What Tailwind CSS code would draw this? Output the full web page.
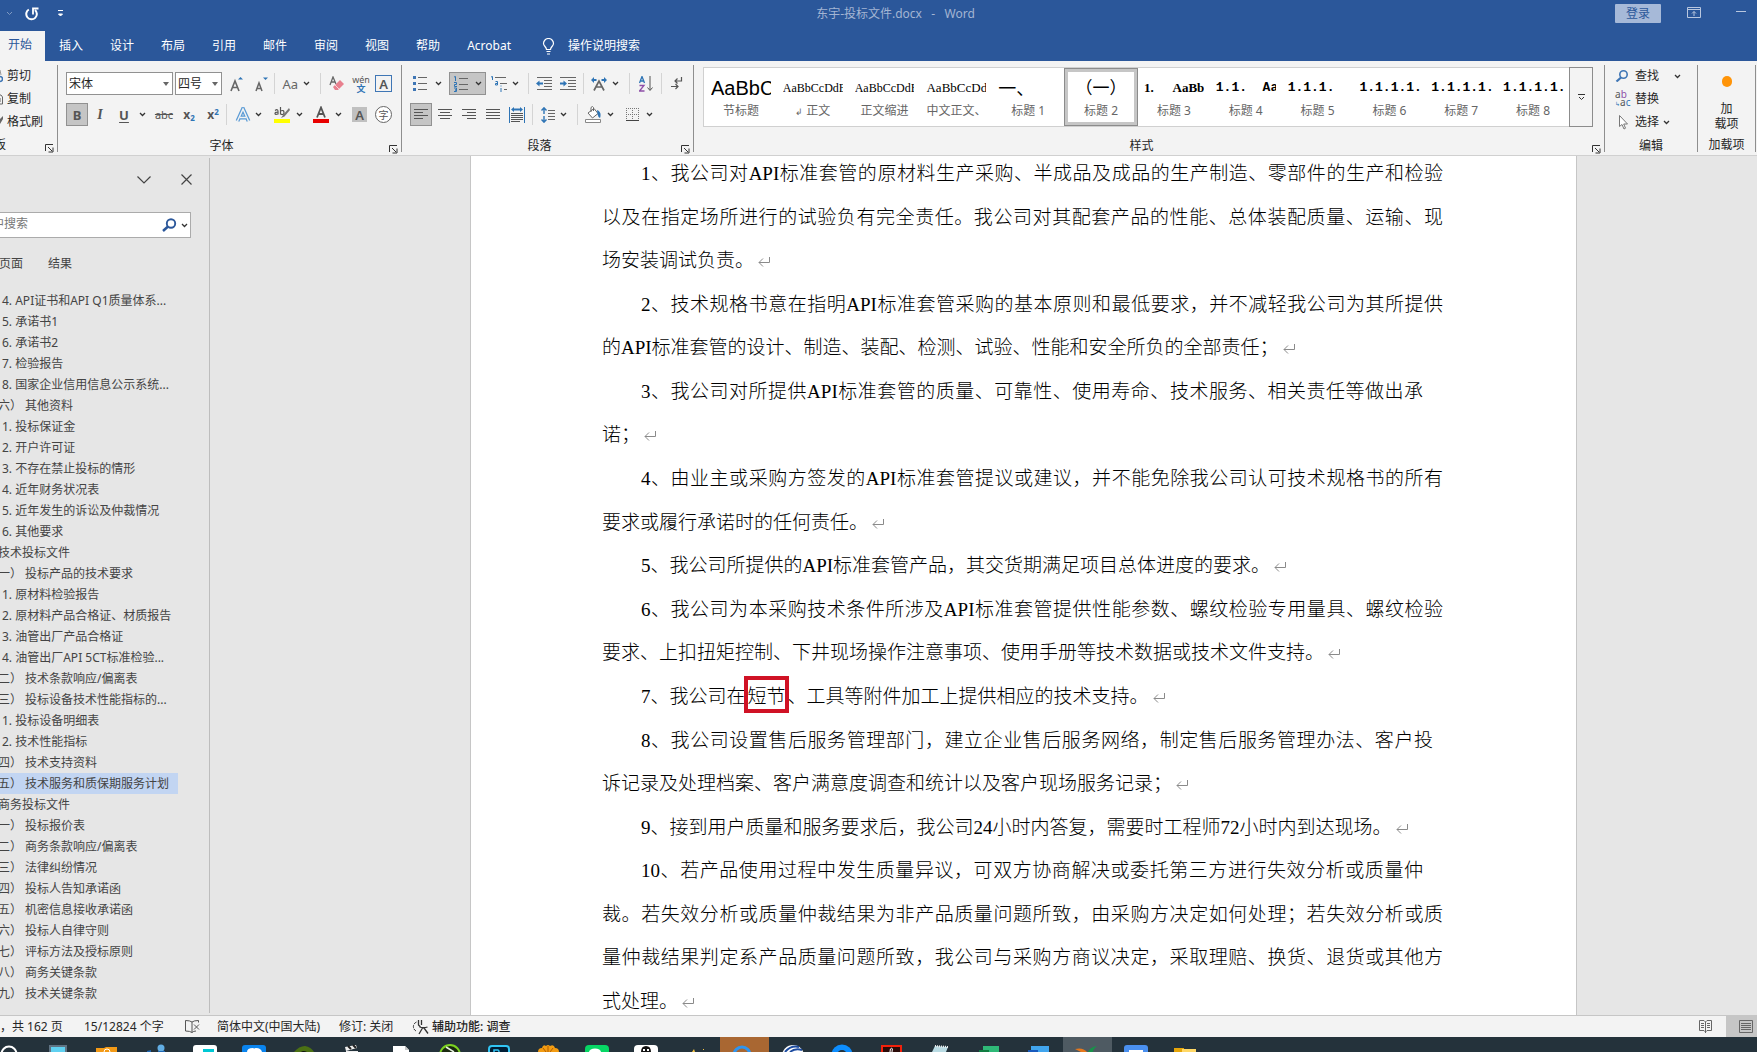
<!DOCTYPE html>
<html lang="zh-CN">
  <head>
    <meta charset="UTF-8" />
    <meta name="viewport" content="width=device-width, initial-scale=1.0" />
    <script src="https://cdn.jsdelivr.net/npm/@tailwindcss/browser@4"></script>
    <title>东宇-投标文件.docx - Word</title>
  </head>
  <body class="h-screen flex flex-col overflow-hidden bg-[#e6e6e6] text-[#262626] text-[12px] leading-[16px] font-['Noto_Sans','Noto_Sans_CJK_SC',sans-serif]">
    <!-- shared icons -->
    <svg class="hidden">
      <symbol id="chev" viewBox="0 0 7 5"><path d="M1 1l2.500 2.500L6 1" fill="none" stroke="#333" stroke-width="1.300" /></symbol>
      <symbol id="tri" viewBox="0 0 6 4"><path d="M0 0h6L3 4z" fill="#666" /></symbol>
      <symbol id="launch" viewBox="0 0 9 9"><path d="M.5 7V.5H8M3 3l4 4M8 3.500V8H3.500" fill="none" stroke="#333" /></symbol>
      <symbol id="enter" viewBox="0 0 12 10"><path d="M11.500 0v5.500H1M5 1.500l-4 4 4 4" fill="none" stroke="#8a8a8a" /></symbol>
    </svg>

    <header class="bg-[#2b579a] shrink-0">
      <div class="h-[31px] flex">
        <div class="w-[176px] flex items-center pl-[6px] pb-1">
          <svg class="w-[7px] h-[5px] opacity-40" viewBox="0 0 7 5"><path d="M1 1l2.500 2.500L6 1" fill="none" stroke="#fff" /></svg>
          <button class="ml-3" aria-label="重复">
            <svg class="w-[14px] h-[14px]" viewBox="0 0 14 14"><path d="M3.800 2.500A5.300 5.300 0 1 0 10 3" fill="none" stroke="#fff" stroke-width="2" /><path d="M13.500 1.500H8V7.500" fill="none" stroke="#fff" stroke-width="1.800" /></svg>
          </button>
          <button class="ml-[18px]" aria-label="自定义快速访问工具栏">
            <svg class="w-[7px] h-[7px]" viewBox="0 0 7 7"><path d="M1 .5h5M1.500 4h4L3.500 6z" fill="#fff" stroke="#fff" /></svg>
          </button>
        </div>
        <div class="flex-1 text-center text-[#a3b5d3] pt-[6px] whitespace-pre">东宇-投标文件.docx   -   Word</div>
        <div class="w-[142px] flex pt-1">
          <button class="w-[46px] h-[19px] bg-[#a6b9d8] text-[#2b579a] rounded-[1px]">登录</button>
          <svg class="w-[14px] h-[11px] ml-[26px] mt-[3px]" viewBox="0 0 14 11"><path d="M.5.500h13v10H.5zM.5 2.500h13M7 9V4.500M5 6.500l2-2 2 2" fill="none" stroke="#b9c7df" /></svg>
          <svg class="w-[10px] h-[2px] ml-[35px] mt-[7px]" viewBox="0 0 10 2"><path d="M0 .5h10" stroke="#b9c7df" /></svg>
        </div>
      </div>
      <nav class="h-[30px] flex items-center gap-[27px] text-white">
        <a href="#" class="h-full w-[45px] -mr-[13px] pl-2 pt-[6px] bg-[#f3f3f3] text-[#2b579a]">开始</a>
        <a href="#">插入</a>
        <a href="#">设计</a>
        <a href="#">布局</a>
        <a href="#">引用</a>
        <a href="#">邮件</a>
        <a href="#">审阅</a>
        <a href="#">视图</a>
        <a href="#">帮助</a>
        <a href="#">Acrobat</a>
        <a href="#" class="flex items-center gap-[13px] pl-1">
          <svg class="w-[13px] h-[17px]" viewBox="0 0 13 17"><path d="M4.500 11.500C4.500 9 1.500 8 1.500 5.500a5 5 0 0 1 10 0c0 2.500-3 3.500-3 6zM4.500 13.500h4M5 16h3" fill="none" stroke="#fff" stroke-width="1.200" /></svg>
          操作说明搜索
        </a>
      </nav>
    </header>

    <section class="h-[95px] shrink-0 bg-[#f3f3f3] border-b border-[#d0d0d0] flex pt-1 pb-[3px]">
      <!-- clipboard -->
      <div class="w-[58px] shrink-0 border-r border-[#8e8e8e]">
        <div class="flex flex-col gap-[7px] pt-[3px]">
          <button class="flex items-center gap-1 h-4 whitespace-nowrap">
            <svg class="w-[3px] h-[14px]" viewBox="0 0 3 14"><path d="M0 1l1 5" stroke="#999" /><circle cx="0" cy="10" r="2.500" fill="none" stroke="#3f76b5" stroke-width="1.500" /></svg>剪切
          </button>
          <button class="flex items-center gap-1 h-4 whitespace-nowrap">
            <svg class="w-[3px] h-[14px]" viewBox="0 0 3 14"><path d="M0 3h1l1.500 2v7H0M0 7h1M0 9h1" fill="none" stroke="#666" /></svg>复制
          </button>
          <button class="flex items-center gap-1 h-4 whitespace-nowrap">
            <svg class="w-[3px] h-[14px]" viewBox="0 0 3 14"><path d="M0 4l3-3v3L0 9z" fill="#666" /></svg>格式刷
          </button>
        </div>
        <div class="flex justify-between items-end pr-[3px] mt-[7px]">
          <span class="-ml-[6px]">板</span>
          <svg class="w-[9px] h-[9px]"><use href="#launch" /></svg>
        </div>
      </div>

      <!-- font -->
      <div class="w-[344px] shrink-0 border-r border-[#8e8e8e] pt-[7px] pl-2">
        <div class="flex items-center h-[23px]">
          <div class="relative">
            <select aria-label="字体" class="appearance-none block w-[107px] h-[23px] bg-white border border-[#919191] pl-[2px]"><option>宋体</option></select>
            <svg class="absolute right-1 top-[10px] w-[6px] h-[4px] pointer-events-none"><use href="#tri" /></svg>
          </div>
          <div class="relative ml-[2px]">
            <select aria-label="字号" class="appearance-none block w-[47px] h-[23px] bg-white border border-[#919191] pl-[2px]"><option>四号</option></select>
            <svg class="absolute right-1 top-[10px] w-[6px] h-[4px] pointer-events-none"><use href="#tri" /></svg>
          </div>
          <button class="w-[28px] flex justify-center" aria-label="增大字号">
            <svg class="w-[13px] h-[16px]" viewBox="0 0 13 16"><path d="M1 15L5 5l4 10M2.500 11.500h5" fill="none" stroke="#666" stroke-width="1.600" /><path d="M8 3.500h5L10.500 1z" fill="#2e74b5" /></svg>
          </button>
          <button class="w-[22px] flex justify-center" aria-label="减小字号">
            <svg class="w-[13px] h-[16px]" viewBox="0 0 13 16"><path d="M1 15l3-8 3 8M2 12.500h4" fill="none" stroke="#666" stroke-width="1.500" /><path d="M8 1.500h5L10.500 4z" fill="#2e74b5" /></svg>
          </button>
          <i class="w-px h-[21px] bg-[#d4d4d4] mx-[2px]"></i>
          <button class="w-[33px] flex items-center justify-end gap-[5px] text-[13px] text-[#666]">Aa <svg class="w-[7px] h-[5px]"><use href="#chev" /></svg></button>
          <i class="w-px h-[21px] bg-[#d4d4d4] ml-[10px]"></i>
          <button class="w-[24px] flex justify-end" aria-label="清除格式">
            <svg class="w-[16px] h-[16px]" viewBox="0 0 16 16"><path d="M1 9l3-8 3 7M2 6h4" fill="none" stroke="#666" stroke-width="1.300" /><path d="M4 11l7-7 4 4-6 6H6z" fill="#e8808e" /><path d="M6 9l4 4" stroke="#f7d5da" /></svg>
          </button>
          <button class="ml-1 w-[24px] text-[9px] leading-[9px] text-[#555]">wén<br /><span class="text-[#2e74b5] font-bold">文</span></button>
          <button class="ml-[2px] w-[17px] h-[17px] border border-[#3f76b5] text-[13px] leading-[14px] font-semibold text-[#555]">A</button>
        </div>
        <div class="flex items-center h-[23px] mt-2 text-[#555]">
          <button class="w-[22px] h-[23px] bg-[#c5c5c5] border border-[#919191] font-bold text-[13px]">B</button>
          <button class="w-[24px] text-[14px] italic font-['Liberation_Serif'] font-bold">I</button>
          <button class="w-[24px] text-[13px] font-bold underline underline-offset-2">U</button>
          <svg class="w-[7px] h-[5px] ml-[3px]"><use href="#chev" /></svg>
          <button class="ml-[3px] w-[30px] text-[11px] line-through">abc</button>
          <button class="w-[20px] font-bold text-[12px]">x<sub class="text-[8px] text-[#2e74b5]">2</sub></button>
          <button class="w-[28px] font-bold text-[12px]">x<sup class="text-[8px] text-[#2e74b5]">2</sup></button>
          <i class="w-px h-[21px] bg-[#d4d4d4] -ml-px"></i>
          <button class="ml-[8px] w-[16px]" aria-label="文本效果">
            <svg class="w-[16px] h-[16px]" viewBox="0 0 16 16"><path d="M2.500 14L8 2l5.500 12M5 10.500h6" fill="none" stroke="#5b9bd5" stroke-width="4" /><path d="M2.500 14L8 2l5.500 12M5 10.500h6" fill="none" stroke="#f3f3f3" stroke-width="1.500" /></svg>
          </button>
          <svg class="w-[7px] h-[5px] ml-1"><use href="#chev" /></svg>
          <button class="ml-3 w-[16px]" aria-label="突出显示">
            <svg class="w-[16px] h-[17px]" viewBox="0 0 16 17"><path d="M1 4.500q3-2 3 1v3M4 6q-3 0-3 1.500t3 .5M6.500 1v7.500M6.500 5q3.500-1.500 3.500 1.500T6.500 8" fill="none" stroke="#555" stroke-width="1.200" /><path d="M15 2l-6 7-2 3 3.500-1.500L16 4z" fill="#777" /><path d="M0 13h16v4H0z" fill="#ff0" /></svg>
          </button>
          <svg class="w-[7px] h-[5px] ml-[6px]"><use href="#chev" /></svg>
          <button class="ml-[10px] w-[16px]" aria-label="字体颜色">
            <svg class="w-[16px] h-[17px]" viewBox="0 0 16 17"><path d="M4 11.500l4-10 4 10M5.500 8h5" fill="none" stroke="#555" stroke-width="1.800" /><path d="M0 13h16v4H0z" fill="#e80000" /></svg>
          </button>
          <svg class="w-[7px] h-[5px] ml-[6px]"><use href="#chev" /></svg>
          <button class="ml-[10px] w-[15px] h-[15px] bg-[#c0c0c0] text-[13px] leading-[14px] font-semibold">A</button>
          <button class="ml-[8px] w-[17px] h-[17px] border border-[#666] rounded-full text-[10px] leading-[14px] bg-white">字</button>
        </div>
        <div class="flex items-end mt-3 pr-[3px]">
          <span class="flex-1 text-center pr-3">字体</span>
          <svg class="w-[9px] h-[9px]"><use href="#launch" /></svg>
        </div>
      </div>

      <!-- paragraph -->
      <div class="w-[292px] shrink-0 border-r border-[#8e8e8e] pt-[7px] pl-2">
        <div class="flex items-center h-[23px]">
          <button class="ml-[3px] flex items-center gap-[8px]" aria-label="项目符号">
            <svg class="w-[14px] h-[15px]" viewBox="0 0 14 15"><path d="M0 0h3v3H0zM0 6h3v3H0zM0 12h3v3H0z" fill="#3f76b5" /><path d="M5 1.500h9M5 7.500h9M5 13.500h9" stroke="#666" /></svg>
            <svg class="w-[7px] h-[5px]"><use href="#chev" /></svg>
          </button>
          <button class="ml-[7px] w-[37px] h-[23px] bg-[#c5c5c5] border border-[#919191] flex items-center justify-center gap-[7px]" aria-label="编号">
            <svg class="w-[14px] h-[16px]" viewBox="0 0 14 16"><path d="M0 1l1.500-.5V5M0 6.500h2.500v2H.5v2H3M0 12h2.500v2H1h1.500v1.500H0" fill="none" stroke="#2e74b5" /><path d="M5 2.500h9M5 8.500h9M5 13.500h9" stroke="#666" /></svg>
            <svg class="w-[7px] h-[5px]"><use href="#chev" /></svg>
          </button>
          <button class="ml-[5px] flex items-center gap-[5px]" aria-label="多级列表">
            <svg class="w-[16px] h-[16px]" viewBox="0 0 16 16"><path d="M0 1l1.500-.5V4M4.500 5.500h2v3.500H4.500V7.500h2M10 9.500v1M10 12v4" fill="none" stroke="#2e74b5" /><path d="M4 1.500h11M9 7.500h7M13 13.500h3" stroke="#666" /></svg>
            <svg class="w-[7px] h-[5px]"><use href="#chev" /></svg>
          </button>
          <i class="w-px h-[21px] bg-[#d4d4d4] ml-[9px]"></i>
          <button class="ml-[7px]" aria-label="减少缩进量">
            <svg class="w-[16px] h-[13px]" viewBox="0 0 16 13"><path d="M1 .5h15M8 3.500h8M8 6.500h8M8 9.500h8M1 12.500h15" stroke="#666" /><path d="M0 6.500l3.500-3v2H7v2H3.500v2z" fill="#2e74b5" /></svg>
          </button>
          <button class="ml-2" aria-label="增加缩进量">
            <svg class="w-[16px] h-[13px]" viewBox="0 0 16 13"><path d="M0 .5h16M8 3.500h8M8 6.500h8M8 9.500h8M0 12.500h16" stroke="#666" /><path d="M7 6.500l-3.500-3v2H0v2h3.500v2z" fill="#2e74b5" /></svg>
          </button>
          <i class="w-px h-[21px] bg-[#d4d4d4] ml-[7px]"></i>
          <button class="ml-[7px] flex items-center gap-[5px]" aria-label="中文版式">
            <svg class="w-[16px] h-[14px]" viewBox="0 0 16 14"><path d="M3 13.500l5-9.500 5 9.500M5 10h6" fill="none" stroke="#666" stroke-width="1.700" /><path d="M0 3l3-3v2h2.500v2H3v2zM16 3l-3-3v2h-2.500v2H13v2z" fill="#2e74b5" /></svg>
            <svg class="w-[7px] h-[5px]"><use href="#chev" /></svg>
          </button>
          <i class="w-px h-[21px] bg-[#d4d4d4] ml-[10px]"></i>
          <button class="ml-[9px]" aria-label="排序">
            <svg class="w-[14px] h-[16px]" viewBox="0 0 14 16"><path d="M.5 7L3 .5 5.500 7M1.500 5h3" fill="none" stroke="#2e74b5" stroke-width="1.300" /><path d="M.5 9.500h4.500l-4.500 5.500h5" fill="none" stroke="#8e4fa8" stroke-width="1.300" /><path d="M11 0v14M8.500 11.500l2.500 3 2.500-3" fill="none" stroke="#555" /></svg>
          </button>
          <i class="w-px h-[21px] bg-[#d4d4d4] ml-[8px]"></i>
          <button class="ml-[9px]" aria-label="显示编辑标记">
            <svg class="w-[12px] h-[14px]" viewBox="0 0 12 14"><path d="M10.500 0v4H4M6.500 1.500L4 4l2.500 2.500M0 9.500h7M4.500 7L7 9.500 4.500 12" fill="none" stroke="#555" stroke-width="1.200" /></svg>
          </button>
        </div>
        <div class="flex items-center h-[23px] mt-2">
          <button class="w-[22px] h-[23px] bg-[#c5c5c5] border border-[#919191] flex items-center justify-center" aria-label="左对齐">
            <svg class="w-[14px] h-[11px]" viewBox="0 0 14 11"><path d="M0 .5h14M0 3.500h9M0 6.500h14M0 9.500h9" stroke="#555" /></svg>
          </button>
          <button class="ml-[6px]" aria-label="居中"><svg class="w-[14px] h-[11px]" viewBox="0 0 14 11"><path d="M0 .5h14M2 3.500h10M0 6.500h14M2 9.500h10" stroke="#555" /></svg></button>
          <button class="ml-[10px]" aria-label="右对齐"><svg class="w-[14px] h-[11px]" viewBox="0 0 14 11"><path d="M0 .5h14M5 3.500h9M0 6.500h14M5 9.500h9" stroke="#555" /></svg></button>
          <button class="ml-[10px]" aria-label="两端对齐"><svg class="w-[14px] h-[11px]" viewBox="0 0 14 11"><path d="M0 .5h14M0 3.500h14M0 6.500h14M0 9.500h14" stroke="#555" /></svg></button>
          <button class="ml-[9px]" aria-label="分散对齐">
            <svg class="w-[16px] h-[16px]" viewBox="0 0 16 16"><path d="M.5 0v16M15.500 0v16" stroke="#2e74b5" /><path d="M2 2.500l3-2.500v1.500h6V0l3 2.500L11 5V3.500H5V5z" fill="#2e74b5" /><path d="M2 6.500h12M2 8.500h12M2 10.500h12M2 12.500h12M2 14.500h9" stroke="#555" /></svg>
          </button>
          <i class="w-px h-[21px] bg-[#d4d4d4] ml-[7px]"></i>
          <button class="ml-[8px] flex items-center gap-[5px]" aria-label="行距">
            <svg class="w-[14px] h-[16px]" viewBox="0 0 14 16"><path d="M3 1v6M3 9v6M.5 3.500L3 .8l2.500 2.700M.5 12.500L3 15.200l2.500-2.700" fill="none" stroke="#2e74b5" stroke-width="1.400" /><path d="M7 3.500h7M7 6.500h7M7 9.500h7M7 12.500h7" stroke="#666" /></svg>
            <svg class="w-[7px] h-[5px]"><use href="#chev" /></svg>
          </button>
          <i class="w-px h-[21px] bg-[#d4d4d4] ml-[10px]"></i>
          <button class="ml-[7px] flex items-center gap-[6px]" aria-label="底纹">
            <svg class="w-[16px] h-[17px]" viewBox="0 0 16 17"><path d="M3 7l6-4.500 4 5L7.500 12zM6 6V1.500q1.500-2 2.500 0V5" fill="#fff" stroke="#666" /><path d="M12 4q5 2 3 8-2-1-2.500-4z" fill="#2e74b5" /><path d="M.5 13.500h15v3H.5z" fill="#fff" stroke="#888" /></svg>
            <svg class="w-[7px] h-[5px]"><use href="#chev" /></svg>
          </button>
          <button class="ml-[12px] flex items-center gap-[7px]" aria-label="边框">
            <svg class="w-[13px] h-[13px]" viewBox="0 0 13 13"><path d="M.5 0v12M6.500 0v12M12.500 0v12M0 .5h13M0 6.500h13" stroke="#777" stroke-dasharray="1 1" /><path d="M0 12.500h13" stroke="#444" /></svg>
            <svg class="w-[7px] h-[5px]"><use href="#chev" /></svg>
          </button>
        </div>
        <div class="flex items-end mt-3 pr-[3px]">
          <span class="flex-1 text-center pr-3">段落</span>
          <svg class="w-[9px] h-[9px]"><use href="#launch" /></svg>
        </div>
      </div>

      <!-- styles -->
      <div class="flex-1 min-w-0 border-r border-[#8e8e8e] pt-[2px] pl-[9px] pr-[3px]">
        <div class="flex h-[60px] mr-2 bg-white border border-[#d0d0d0] text-center text-[#666]">
          <div class="flex-1 min-w-0 flex pl-px *:flex *:flex-col *:items-center *:flex-1 *:min-w-0 *:overflow-hidden *:px-[6px] *:pt-[8px]">
            <button>
              <div class="w-full h-[27px] leading-[24px] text-[20px] text-black overflow-hidden text-left font-['Liberation_Sans']">AaBbC</div>
              节标题
            </button>
            <button>
              <div class="w-full h-[27px] leading-[24px] text-[12px] text-black overflow-hidden whitespace-nowrap text-left font-['Liberation_Serif']">AaBbCcDdE</div>
              <span><span class="text-[9px]">↲</span> 正文</span>
            </button>
            <button>
              <div class="w-full h-[27px] leading-[24px] text-[12px] text-black overflow-hidden whitespace-nowrap text-left font-['Liberation_Serif']">AaBbCcDdE</div>
              正文缩进
            </button>
            <button>
              <div class="w-full h-[27px] leading-[24px] text-[13px] text-black overflow-hidden whitespace-nowrap text-left font-['Liberation_Serif']">AaBbCcDdE</div>
              <span class="whitespace-nowrap">中文正文、</span>
            </button>
            <button>
              <div class="w-full h-[27px] leading-[24px] text-[18px] text-black overflow-hidden whitespace-nowrap text-left">一、</div>
              标题 1
            </button>
            <button class="outline outline-[#8c8c8c] -outline-offset-1 border-4 border-[#c6c6c6] !px-[3px] !pt-[4px]">
              <div class="w-full h-[27px] leading-[24px] text-[17px] text-black overflow-hidden whitespace-nowrap">（一）</div>
              标题 2
            </button>
            <button>
              <div class="w-full h-[27px] leading-[24px] text-[13px] font-bold text-black overflow-hidden whitespace-pre text-left font-['Liberation_Serif']">1.      AaBbC</div>
              标题 3
            </button>
            <button>
              <div class="w-full h-[27px] leading-[24px] text-[13px] font-bold text-black overflow-hidden whitespace-pre text-left font-['Liberation_Mono']">1.1.  AaB</div>
              标题 4
            </button>
            <button>
              <div class="w-full h-[27px] leading-[24px] text-[13px] font-bold text-black overflow-hidden whitespace-pre text-left font-['Liberation_Mono']">1.1.1.</div>
              标题 5
            </button>
            <button>
              <div class="w-full h-[27px] leading-[24px] text-[13px] font-bold text-black whitespace-pre text-left font-['Liberation_Mono']">1.1.1.1.</div>
              标题 6
            </button>
            <button>
              <div class="w-full h-[27px] leading-[24px] text-[13px] font-bold text-black whitespace-pre text-left font-['Liberation_Mono']">1.1.1.1.</div>
              标题 7
            </button>
            <button>
              <div class="w-full h-[27px] leading-[24px] text-[13px] font-bold text-black whitespace-pre text-left font-['Liberation_Mono']">1.1.1.1.</div>
              标题 8
            </button>
          </div>
          <button class="w-6 -my-px -mr-px border border-[#8c8c8c] bg-[#f3f3f3] flex items-center justify-center" aria-label="其他样式">
            <svg class="w-[7px] h-[7px]" viewBox="0 0 7 7"><path d="M0 .5h7M1 3l2.500 2.500L6 3" fill="none" stroke="#333" /></svg>
          </button>
        </div>
        <div class="flex items-end mt-[11px]">
          <span class="flex-1 text-center pr-3">样式</span>
          <svg class="w-[9px] h-[9px]"><use href="#launch" /></svg>
        </div>
      </div>

      <!-- editing -->
      <div class="w-[93px] shrink-0 border-r border-[#8e8e8e] pt-[3px] flex flex-col">
        <div class="flex flex-col gap-[7px] pl-[10px]">
          <button class="flex items-center h-4">
            <svg class="w-[14px] h-[12px] mr-[6px]" viewBox="0 0 14 12"><circle cx="8.500" cy="4.500" r="3.700" fill="none" stroke="#3f76b5" stroke-width="1.600" /><path d="M6 7.500L1.500 11.500" stroke="#3f76b5" stroke-width="2.200" /></svg>
            查找
            <svg class="w-[7px] h-[5px] ml-[15px]"><use href="#chev" /></svg>
          </button>
          <button class="flex items-center h-4">
            <span class="w-[16px] mr-1 text-[10px] leading-[8px] text-left text-[#555]">a<span class="text-[#8e4fa8]">b</span><br /><span class="text-[#2e74b5] text-[6px]">↳</span>a<span class="text-[#2e74b5]">c</span></span>
            替换
          </button>
          <button class="flex items-center h-4">
            <svg class="w-[9px] h-[15px] ml-1 mr-[7px]" viewBox="0 0 9 15"><path d="M.5.500v11l2.500-2 2 4.500 1.500-.8-1.800-4.200H8.500z" fill="#fff" stroke="#777" /></svg>
            选择
            <svg class="w-[7px] h-[5px] ml-1"><use href="#chev" /></svg>
          </button>
        </div>
        <div class="text-center mt-[8px]">编辑</div>
      </div>

      <!-- add-ins -->
      <div class="w-[58px] shrink-0 mr-px border-r border-[#8e8e8e] text-center pt-[11px]">
        <button class="flex flex-col items-center w-full leading-[15px]">
          <span class="w-[10px] h-[11px] rounded-full bg-[#ff9408] mb-[14px]"></span>
          <span>加<br />载项</span>
        </button>
        <div class="mt-[6px]">加载项</div>
      </div>
    </section>

    <main class="flex-1 min-h-0 flex">
      <aside class="w-[210px] shrink-0 mt-[2px] mb-[2px] border-r border-[#bdbdbd] overflow-hidden text-[#444] whitespace-nowrap">
        <div class="flex justify-end items-center gap-[30px] pr-[17px] pt-[16px]">
          <button aria-label="任务窗格选项"><svg class="w-[14px] h-[8px]" viewBox="0 0 14 8"><path d="M.5.500L7 7 13.500.500" fill="none" stroke="#444" stroke-width="1.200" /></svg></button>
          <button aria-label="关闭"><svg class="w-[11px] h-[11px]" viewBox="0 0 11 11"><path d="M.5.500l10 10M10.500.500l-10 10" stroke="#444" stroke-width="1.200" /></svg></button>
        </div>
        <div class="mt-[27px] w-[191px] h-[26px] bg-white border border-l-0 border-[#ababab] flex items-center">
          <input aria-label="在文档中搜索" placeholder="中搜索" class="flex-1 min-w-0 outline-none placeholder-[#777] indent-[-8px] pb-[2px]" />
          <svg class="w-[15px] h-[14px] mr-1" viewBox="0 0 15 14"><circle cx="9" cy="5.500" r="4.200" fill="none" stroke="#2b579a" stroke-width="1.900" /><path d="M6 8.500l-5 4.500" stroke="#2b579a" stroke-width="2.500" /></svg>
          <svg class="w-[7px] h-[5px] mr-[2px]"><use href="#chev" /></svg>
        </div>
        <div class="flex gap-[25px] mt-[18px] -ml-px">
          <button>页面</button>
          <button>结果</button>
        </div>
        <ul class="mt-[18px] leading-[21px]">
          <li class="ml-[2px]">4. API证书和API Q1质量体系...</li>
          <li class="ml-[2px]">5. 承诺书1</li>
          <li class="ml-[2px]">6. 承诺书2</li>
          <li class="ml-[2px]">7. 检验报告</li>
          <li class="ml-[2px]">8. 国家企业信用信息公示系统...</li>
          <li class="-ml-[2px]">六） 其他资料</li>
          <li class="ml-[2px]">1. 投标保证金</li>
          <li class="ml-[2px]">2. 开户许可证</li>
          <li class="ml-[2px]">3. 不存在禁止投标的情形</li>
          <li class="ml-[2px]">4. 近年财务状况表</li>
          <li class="ml-[2px]">5. 近年发生的诉讼及仲裁情况</li>
          <li class="ml-[2px]">6. 其他要求</li>
          <li class="-ml-[2px]">技术投标文件</li>
          <li class="-ml-[2px]">一） 投标产品的技术要求</li>
          <li class="ml-[2px]">1. 原材料检验报告</li>
          <li class="ml-[2px]">2. 原材料产品合格证、材质报告</li>
          <li class="ml-[2px]">3. 油管出厂产品合格证</li>
          <li class="ml-[2px]">4. 油管出厂API 5CT标准检验...</li>
          <li class="-ml-[2px]">二） 技术条款响应/偏离表</li>
          <li class="-ml-[2px]">三） 投标设备技术性能指标的...</li>
          <li class="ml-[2px]">1. 投标设备明细表</li>
          <li class="ml-[2px]">2. 技术性能指标</li>
          <li class="-ml-[2px]">四） 技术支持资料</li>
          <li class="-ml-[2px] w-[180px] bg-[#c2d5f2]">五） 技术服务和质保期服务计划</li>
          <li class="-ml-[2px]">商务投标文件</li>
          <li class="-ml-[2px]">一） 投标报价表</li>
          <li class="-ml-[2px]">二） 商务条款响应/偏离表</li>
          <li class="-ml-[2px]">三） 法律纠纷情况</li>
          <li class="-ml-[2px]">四） 投标人告知承诺函</li>
          <li class="-ml-[2px]">五） 机密信息接收承诺函</li>
          <li class="-ml-[2px]">六） 投标人自律守则</li>
          <li class="-ml-[2px]">七） 评标方法及授标原则</li>
          <li class="-ml-[2px]">八） 商务关键条款</li>
          <li class="-ml-[2px]">九） 技术关键条款</li>
        </ul>
      </aside>

      <div class="flex-1 min-w-0 pl-[260px] pr-[180px] flex">
        <!-- one block per typeset line; full lines are justified to the margins -->
        <article class="flex-1 min-w-0 bg-white border-x border-[#c6c6c6] pl-[131px] pr-[133px] pt-[7px] pb-[2px] flex flex-col justify-between text-[19px] leading-[22px] text-black font-light whitespace-nowrap font-['Liberation_Serif','Noto_Sans_CJK_SC',serif]">
          <p class="pl-[39px] [text-align-last:justify]">1、我公司对API标准套管的原材料生产采购、半成品及成品的生产制造、零部件的生产和检验</p>
          <p class="[text-align-last:justify]">以及在指定场所进行的试验负有完全责任。我公司对其配套产品的性能、总体装配质量、运输、现</p>
          <p>场安装调试负责。<svg class="inline align-baseline w-[12px] h-[10px] ml-1"><use href="#enter" /></svg></p>
          <p class="pl-[39px] [text-align-last:justify]">2、技术规格书意在指明API标准套管采购的基本原则和最低要求，并不减轻我公司为其所提供</p>
          <p>的API标准套管的设计、制造、装配、检测、试验、性能和安全所负的全部责任；<svg class="inline align-baseline w-[12px] h-[10px] ml-1"><use href="#enter" /></svg></p>
          <p class="pl-[39px] pr-[20px] [text-align-last:justify]">3、我公司对所提供API标准套管的质量、可靠性、使用寿命、技术服务、相关责任等做出承</p>
          <p>诺；<svg class="inline align-baseline w-[12px] h-[10px] ml-1"><use href="#enter" /></svg></p>
          <p class="pl-[39px] [text-align-last:justify]">4、由业主或采购方签发的API标准套管提议或建议，并不能免除我公司认可技术规格书的所有</p>
          <p>要求或履行承诺时的任何责任。<svg class="inline align-baseline w-[12px] h-[10px] ml-1"><use href="#enter" /></svg></p>
          <p class="pl-[39px]">5、我公司所提供的API标准套管产品，其交货期满足项目总体进度的要求。<svg class="inline align-baseline w-[12px] h-[10px] ml-1"><use href="#enter" /></svg></p>
          <p class="pl-[39px] [text-align-last:justify]">6、我公司为本采购技术条件所涉及API标准套管提供性能参数、螺纹检验专用量具、螺纹检验</p>
          <p>要求、上扣扭矩控制、下井现场操作注意事项、使用手册等技术数据或技术文件支持。<svg class="inline align-baseline w-[12px] h-[10px] ml-1"><use href="#enter" /></svg></p>
          <p class="pl-[39px]">7、我公司在<span class="relative mx-[2px]">短节<i class="absolute -left-1 -right-[3px] -top-[10px] h-[37px] border-4 border-[#d01225]"></i></span>、工具等附件加工上提供相应的技术支持。<svg class="inline align-baseline w-[12px] h-[10px] ml-1"><use href="#enter" /></svg></p>
          <p class="pl-[39px] pr-[10px] [text-align-last:justify]">8、我公司设置售后服务管理部门，建立企业售后服务网络，制定售后服务管理办法、客户投</p>
          <p>诉记录及处理档案、客户满意度调查和统计以及客户现场服务记录；<svg class="inline align-baseline w-[12px] h-[10px] ml-1"><use href="#enter" /></svg></p>
          <p class="pl-[39px]">9、接到用户质量和服务要求后，我公司24小时内答复，需要时工程师72小时内到达现场。<svg class="inline align-baseline w-[12px] h-[10px] ml-1"><use href="#enter" /></svg></p>
          <p class="pl-[39px] pr-[20px] [text-align-last:justify]">10、若产品使用过程中发生质量异议，可双方协商解决或委托第三方进行失效分析或质量仲</p>
          <p class="[text-align-last:justify]">裁。若失效分析或质量仲裁结果为非产品质量问题所致，由采购方决定如何处理；若失效分析或质</p>
          <p class="[text-align-last:justify]">量仲裁结果判定系产品质量问题所致，我公司与采购方商议决定，采取理赔、换货、退货或其他方</p>
          <p>式处理。<svg class="inline align-baseline w-[12px] h-[10px] ml-1"><use href="#enter" /></svg></p>
        </article>
      </div>
    </main>

    <footer class="h-[22px] shrink-0 bg-[#f3f3f3] border-t border-[#c6c6c6] flex items-center whitespace-nowrap">
      <span class="w-[84px]">，共 162 页</span>
      <span class="w-[101px]">15/12824 个字</span>
      <svg class="w-[15px] h-[13px] mr-[17px]" viewBox="0 0 15 13"><path d="M7 12.500V2Q5 .5.500.500v10.500Q5 11 7 12.500q1.500-1.500 4-1.500M7 2Q9 .5 13.500.500v2M9 4.500l5 5M14 4.500l-5 5" fill="none" stroke="#555" /></svg>
      <span class="w-[122px]">简体中文(中国大陆)</span>
      <span class="w-[73px]">修订: 关闭</span>
      <svg class="w-[17px] h-[16px] mr-[3px]" viewBox="0 0 17 16"><path d="M4.500 3A5 5 0 0 0 4 12" fill="none" stroke="#333" stroke-dasharray="3 1" /><path d="M6.500 1v5l2 2M9.500 1v5M7.500 8q4 1.500 8 0M10.500 9L7 15M12 9l4 5.500" fill="none" stroke="#333" stroke-width="1.300" /></svg>
      <span class="font-medium">辅助功能: 调查</span>
      <div class="ml-auto h-full flex items-center">
        <button class="mr-[14px]" aria-label="阅读视图"><svg class="w-[13px] h-[13px]" viewBox="0 0 13 13"><path d="M6.500 2L5 .5H.5v10H5L6.500 12 8 10.500h4.500V.5H8zv11M2 3.500h3M2 5.500h3M2 7.500h3M8 3.500h3M8 5.500h3M8 7.500h3" fill="none" stroke="#666" /></svg></button>
        <button class="w-[31px] h-full bg-[#c6c6c6] flex items-center justify-end pr-1" aria-label="页面视图"><svg class="w-[14px] h-[13px]" viewBox="0 0 14 13"><path d="M.5.500h13v12H.5zM2 3.500h10M2 5.500h10M2 7.500h10M2 9.500h10" fill="none" stroke="#666" /></svg></button>
      </div>
    </footer>

    <!-- taskbar, cut off by the bottom of the screen -->
    <div class="h-[15px] shrink-0 bg-[#24323b] flex overflow-hidden *:w-[49px] *:shrink-0 *:h-[15px]">
      <svg class="!w-[34px]" viewBox="0 0 34 15"><circle cx="9" cy="17" r="7.500" fill="none" stroke="#fff" stroke-width="2" /></svg>
      <svg viewBox="0 0 49 15"><path d="M15 8h18v7H15z" fill="#5f7383" /><path d="M17 10h14v5H17z" fill="#5fd0f0" /></svg>
      <svg viewBox="0 0 49 15"><path d="M13 11h8l2-1h11v5H13z" fill="#f39a16" /><circle cx="24" cy="15" r="3" fill="none" stroke="#fff" /></svg>
      <svg viewBox="0 0 49 15"><circle cx="29" cy="11" r="3.500" fill="#62aee4" /><path d="M15 14l4-1v2h-4zM26 14h7v1h-7z" fill="#2068b4" /></svg>
      <svg viewBox="0 0 49 15"><rect x="12" y="8" width="24" height="12" rx="3" fill="#fff" /><path d="M22 12h11v3H22z" fill="#00c8d4" /></svg>
      <svg viewBox="0 0 49 15"><rect x="12" y="8" width="24" height="12" rx="3" fill="#0a84ee" /><path d="M17 15q0-4 6-4 1 0 1 1 0-1 2-1 5 0 6 4z" fill="#fff" /></svg>
      <svg viewBox="0 0 49 15"><path d="M15 15q5-6 11-6 6 1 9 6z" fill="#4b7114" /><path d="M22 15q2-2 6 0z" fill="#111" /></svg>
      <svg viewBox="0 0 49 15"><path d="M17 10l11-2 1 3-11 3zM18 14h12v1H18z" fill="#eee" /><path d="M20 9l3 3M25 8l3 3" stroke="#222" stroke-width="2" /></svg>
      <svg viewBox="0 0 49 15"><path d="M16 9h12l4 4v2H16z" fill="#fff" /><path d="M28 9l4 4h-4z" fill="#c5c5c5" /></svg>
      <svg viewBox="0 0 49 15"><circle cx="24" cy="18" r="10" fill="#1b2a10" stroke="#7dd321" stroke-width="2" /><path d="M20 10l8 5" stroke="#e9f5e0" stroke-width="1.500" /></svg>
      <svg viewBox="0 0 49 15"><rect x="14" y="9" width="20" height="16" rx="3" fill="#001e36" stroke="#31c5f4" stroke-width="2" /><path d="M19 15v-2h4q1 0 1 2" fill="none" stroke="#31c5f4" stroke-width="1.500" /></svg>
      <svg viewBox="0 0 49 15"><path d="M14 15q0-4 4-4 1-4 4-2 2-2 4 0 4-2 5 2 4 0 4 4z" fill="#f39c12" /><path d="M19 11l3 4M24 9v6M29 11l-3 4" stroke="#b55f00" /></svg>
      <svg viewBox="0 0 49 15"><rect x="12" y="8" width="24" height="14" rx="4" fill="#07d765" /><ellipse cx="22" cy="15" rx="6" ry="3.500" fill="#fff" /></svg>
      <svg viewBox="0 0 49 15"><rect x="12" y="8" width="24" height="14" rx="4" fill="#fff" /><path d="M19 15q0-6 5-6t5 6z" fill="#111" /><path d="M22 12v2M26 12v2" stroke="#fff" stroke-width="2" /></svg>
      <svg viewBox="0 0 49 15"><path d="M21 15l2-3 1 3zM32 12h1v1h-1z" fill="#f5c542" /></svg>
      <svg class="bg-[#a96732]" viewBox="0 0 49 15"><circle cx="22" cy="18" r="8" fill="none" stroke="#2f95ef" stroke-width="3" /></svg>
      <svg viewBox="0 0 49 15"><circle cx="24" cy="19" r="11" fill="#fff" /><path d="M16 15q6-7 14-5M21 15q5-4 12-2" fill="none" stroke="#1c4ba0" stroke-width="2" /></svg>
      <svg viewBox="0 0 49 15"><circle cx="24" cy="18" r="10.500" fill="#0d8eff" /><circle cx="24" cy="18" r="5" fill="#24323b" /></svg>
      <svg viewBox="0 0 49 15"><path d="M15 9h19v7H15z" fill="#2b0b08" stroke="#f3210b" stroke-width="2" /><path d="M23 15q0-4 1.500-4T25 15" fill="none" stroke="#fff" /></svg>
      <svg viewBox="0 0 49 15"><path d="M19 9l13 1-2 5H16z" fill="#b9dbe3" /><path d="M19 9l13 1" stroke="#eee" stroke-dasharray="1 1" stroke-width="2" /></svg>
      <svg viewBox="0 0 49 15"><path d="M18 9h16v6H18z" fill="#2fb977" /><path d="M14 13h10v2H14z" fill="#107c41" /></svg>
      <svg viewBox="0 0 49 15"><path d="M17 9h18v6H17z" fill="#41a5ee" /><path d="M14 13h10v2H14z" fill="#185abd" /></svg>
      <svg class="bg-[#4e5a62]" viewBox="0 0 49 15"><path d="M12 12q8-2 12 3h-6z" fill="#e8791c" /><path d="M25 15q2-5 9-6-4 3-4 6z" fill="#19924a" /></svg>
      <svg viewBox="0 0 49 15"><rect x="12" y="8" width="24" height="14" rx="3" fill="#4a90f0" /><path d="M17 13h14v2H17z" fill="#fff" /></svg>
      <svg viewBox="0 0 49 15"><path d="M13 11h10v4H13z" fill="#e5a50a" /><path d="M21 12h14v3H21z" fill="#ffd866" /></svg>
    </div>
  </body>
</html>
